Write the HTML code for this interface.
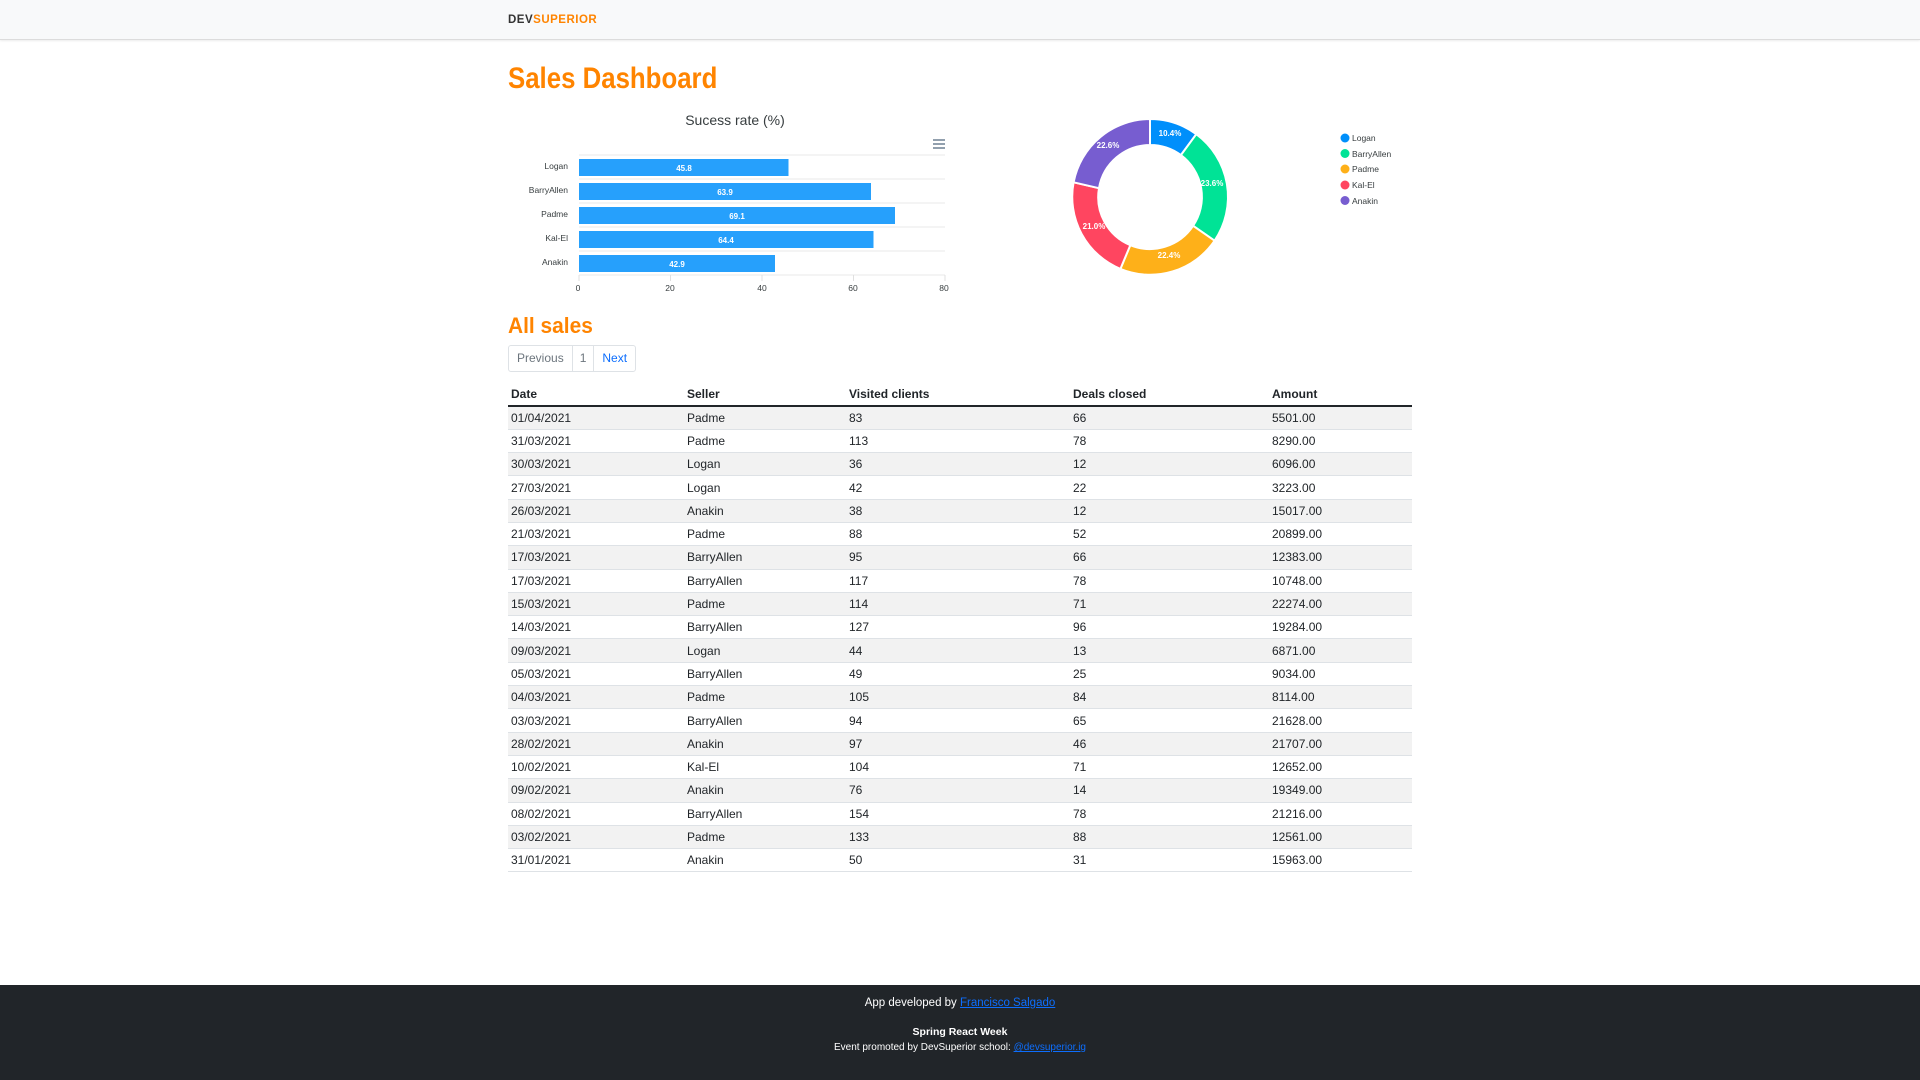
<!DOCTYPE html>
<html><head><meta charset="utf-8"><style>
*{margin:0;padding:0;box-sizing:border-box}
body{width:1920px;height:1080px;position:relative;background:#fff;font-family:"Liberation Sans",sans-serif;overflow:hidden}
.nav{position:absolute;left:0;top:0;width:1920px;height:40px;background:#f8f9fa;border-bottom:1px solid #dcdcdc;box-shadow:0 1px 2px rgba(0,0,0,.08)}
.logo{position:absolute;left:508px;top:14px;font-size:11.5px;font-weight:bold;letter-spacing:.5px;color:#333}
.logo span{color:#ff8400}
h1{position:absolute;left:508px;top:62px;font-size:30px;color:#ff8400;font-weight:bold;transform:scaleX(.86);transform-origin:0 0;white-space:nowrap}
h2{position:absolute;left:508px;top:313px;font-size:22px;color:#ff8400;font-weight:bold;transform:scaleX(.95);transform-origin:0 0}
.pg{position:absolute;left:508px;top:345px;height:27px;display:flex;border:1px solid #dee2e6;border-radius:3px;font-size:12px}
.pg div{padding:0 8px;line-height:25px;border-right:1px solid #dee2e6;color:#6c757d}
.pg div:nth-child(2){padding:0 7px}
.pg div:last-child{border:none;color:#0d6efd}
table{position:absolute;left:508px;top:383px;width:904px;border-collapse:collapse;font-size:12px;color:#212529}
th{text-align:left;font-weight:bold;height:23px;padding-left:3px;border-bottom:2px solid #212529}
td{height:23.3px;padding-left:3px;border-bottom:1px solid #dee2e6}
tr:nth-child(even) td{background:#f2f2f2}
.foot{position:absolute;left:0;top:985px;width:1920px;height:95px;background:#212529;color:#fff;text-align:center;font-size:11.5px}
.foot a{color:#0d6efd;text-decoration:underline}
</style></head><body>
<div class="nav"><div class="logo">DEV<span>SUPERIOR</span></div></div>
<h1>Sales Dashboard</h1>
<svg style="position:absolute;left:0;top:0" width="1920" height="300" font-family="Liberation Sans,sans-serif">
<text x="735" y="125" text-anchor="middle" font-size="14" fill="#373d3f">Sucess rate (%)</text>
<g stroke="#6e8192" stroke-width="1.5"><line x1="933" y1="140" x2="945" y2="140"/><line x1="933" y1="144" x2="945" y2="144"/><line x1="933" y1="148" x2="945" y2="148"/></g>
<g stroke="#e8e8e8"><line x1="579" y1="155" x2="945" y2="155"/><line x1="579" y1="179" x2="945" y2="179"/><line x1="579" y1="203" x2="945" y2="203"/><line x1="579" y1="227" x2="945" y2="227"/><line x1="579" y1="251" x2="945" y2="251"/><line x1="579" y1="275" x2="945" y2="275"/></g>
<g stroke="#e0e0e0"><line x1="579" y1="275" x2="579" y2="281"/><line x1="670.5" y1="275" x2="670.5" y2="281"/><line x1="762" y1="275" x2="762" y2="281"/><line x1="853.5" y1="275" x2="853.5" y2="281"/><line x1="945" y1="275" x2="945" y2="281"/></g>
<g fill="#26a0fc"><rect x="579" y="159" width="209.5" height="17"/><rect x="579" y="183" width="292" height="17"/><rect x="579" y="207" width="316" height="17"/><rect x="579" y="231" width="294.5" height="17"/><rect x="579" y="255" width="196" height="17"/></g>
<g fill="#fff" font-size="8" font-weight="bold" text-anchor="middle"><text x="684" y="171">45.8</text><text x="725" y="195">63.9</text><text x="737" y="219">69.1</text><text x="726" y="243">64.4</text><text x="677" y="267">42.9</text></g>
<g fill="#373d3f" font-size="8.5" text-anchor="end"><text x="568" y="169">Logan</text><text x="568" y="193">BarryAllen</text><text x="568" y="217">Padme</text><text x="568" y="241">Kal-El</text><text x="568" y="265">Anakin</text></g>
<g fill="#373d3f" font-size="8.5" text-anchor="middle"><text x="578" y="291">0</text><text x="670" y="291">20</text><text x="762" y="291">40</text><text x="853" y="291">60</text><text x="944" y="291">80</text></g>
<g stroke="#fff" stroke-width="2">
<path d="M1150 119 A78 78 0 0 1 1196.3 134.2 L1180.9 155.1 A52 52 0 0 0 1150 145Z" fill="#008ffb"/>
<path d="M1196.3 134.2 A78 78 0 0 1 1214.6 240.7 L1193.1 225.8 A52 52 0 0 0 1180.9 155.1Z" fill="#00e396"/>
<path d="M1214.6 240.7 A78 78 0 0 1 1120.4 268.9 L1130.3 245.2 A52 52 0 0 0 1193.1 225.8Z" fill="#feb019"/>
<path d="M1120.4 268.9 A78 78 0 0 1 1073.6 182.3 L1099 188.2 A52 52 0 0 0 1130.3 245.2Z" fill="#ff4560"/>
<path d="M1073.6 182.3 A78 78 0 0 1 1150 119 L1150 145 A52 52 0 0 0 1099 188.2Z" fill="#775dd0"/>
</g>
<g fill="#fff" font-size="8" font-weight="bold" text-anchor="middle"><text x="1170" y="136">10.4%</text><text x="1212" y="186">23.6%</text><text x="1169" y="258">22.4%</text><text x="1094" y="229">21.0%</text><text x="1108" y="148">22.6%</text></g>
<g><circle cx="1345" cy="138" r="4.5" fill="#008ffb"/><circle cx="1345" cy="153.5" r="4.5" fill="#00e396"/><circle cx="1345" cy="169" r="4.5" fill="#feb019"/><circle cx="1345" cy="185" r="4.5" fill="#ff4560"/><circle cx="1345" cy="200.5" r="4.5" fill="#775dd0"/></g>
<g fill="#373d3f" font-size="8.5"><text x="1352" y="141">Logan</text><text x="1352" y="157">BarryAllen</text><text x="1352" y="172">Padme</text><text x="1352" y="188">Kal-El</text><text x="1352" y="204">Anakin</text></g>
</svg>
<h2>All sales</h2>
<div class="pg"><div>Previous</div><div>1</div><div>Next</div></div>
<table>
<colgroup><col style="width:176px"><col style="width:162px"><col style="width:224px"><col style="width:199px"><col></colgroup>
<tr><th>Date</th><th>Seller</th><th>Visited clients</th><th>Deals closed</th><th>Amount</th></tr>
<tr><td>01/04/2021</td><td>Padme</td><td>83</td><td>66</td><td>5501.00</td></tr>
<tr><td>31/03/2021</td><td>Padme</td><td>113</td><td>78</td><td>8290.00</td></tr>
<tr><td>30/03/2021</td><td>Logan</td><td>36</td><td>12</td><td>6096.00</td></tr>
<tr><td>27/03/2021</td><td>Logan</td><td>42</td><td>22</td><td>3223.00</td></tr>
<tr><td>26/03/2021</td><td>Anakin</td><td>38</td><td>12</td><td>15017.00</td></tr>
<tr><td>21/03/2021</td><td>Padme</td><td>88</td><td>52</td><td>20899.00</td></tr>
<tr><td>17/03/2021</td><td>BarryAllen</td><td>95</td><td>66</td><td>12383.00</td></tr>
<tr><td>17/03/2021</td><td>BarryAllen</td><td>117</td><td>78</td><td>10748.00</td></tr>
<tr><td>15/03/2021</td><td>Padme</td><td>114</td><td>71</td><td>22274.00</td></tr>
<tr><td>14/03/2021</td><td>BarryAllen</td><td>127</td><td>96</td><td>19284.00</td></tr>
<tr><td>09/03/2021</td><td>Logan</td><td>44</td><td>13</td><td>6871.00</td></tr>
<tr><td>05/03/2021</td><td>BarryAllen</td><td>49</td><td>25</td><td>9034.00</td></tr>
<tr><td>04/03/2021</td><td>Padme</td><td>105</td><td>84</td><td>8114.00</td></tr>
<tr><td>03/03/2021</td><td>BarryAllen</td><td>94</td><td>65</td><td>21628.00</td></tr>
<tr><td>28/02/2021</td><td>Anakin</td><td>97</td><td>46</td><td>21707.00</td></tr>
<tr><td>10/02/2021</td><td>Kal-El</td><td>104</td><td>71</td><td>12652.00</td></tr>
<tr><td>09/02/2021</td><td>Anakin</td><td>76</td><td>14</td><td>19349.00</td></tr>
<tr><td>08/02/2021</td><td>BarryAllen</td><td>154</td><td>78</td><td>21216.00</td></tr>
<tr><td>03/02/2021</td><td>Padme</td><td>133</td><td>88</td><td>12561.00</td></tr>
<tr><td>31/01/2021</td><td>Anakin</td><td>50</td><td>31</td><td>15963.00</td></tr>
</table>
<div class="foot">
<div style="position:absolute;left:0;width:100%;top:12px;font-size:11.5px">App developed by <a>Francisco Salgado</a></div>
<div style="position:absolute;left:0;width:100%;top:41px;font-weight:bold;font-size:10.5px">Spring React Week</div>
<div style="position:absolute;left:0;width:100%;top:57px;font-size:10px">Event promoted by DevSuperior school: <a>@devsuperior.ig</a></div>
</div>
</body></html>
